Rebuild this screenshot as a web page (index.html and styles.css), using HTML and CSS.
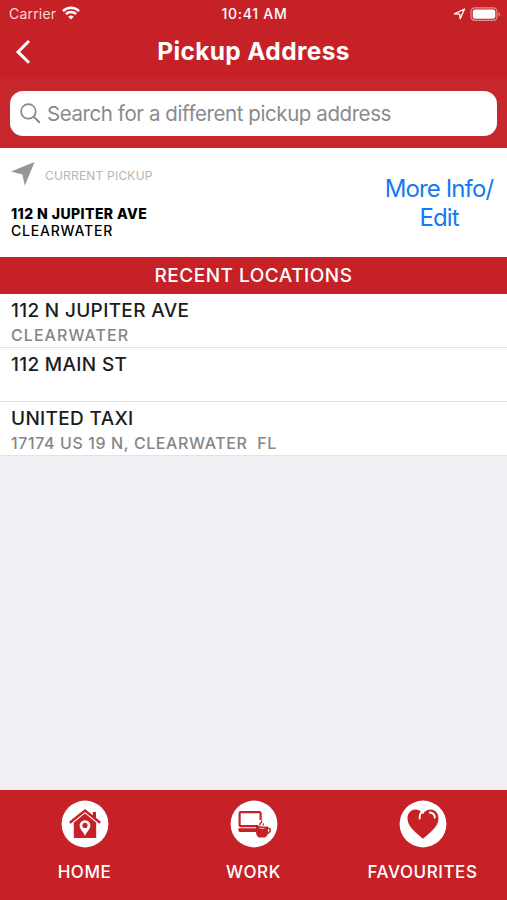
FILE: index.html
```html
<!DOCTYPE html>
<html lang="en">
<head>
    <meta charset="UTF-8">
    <meta name="viewport" content="width=device-width, initial-scale=1.0">
    <title>Pickup Address</title>
    <link rel="stylesheet" href="styles.css">
</head>
<body>
    <div class="app">
        <header class="top">
            <div class="status-bar">
                <div class="carrier">
                    <span>Carrier</span>
                    <svg width="18" height="14" viewBox="0 0 18 14" fill="none" stroke="#fff" stroke-width="2.5">
                        <path d="M1 5.1a11.5 11.5 0 0 1 16 0M3.9 8.2a7.3 7.3 0 0 1 10.2 0"/>
                        <path d="M9 13.6 6.2 10.8a4 4 0 0 1 5.6 0z" fill="#fff" stroke="none"/>
                    </svg>
                </div>
                <div class="time">10:41 AM</div>
                <div class="indicators">
                    <svg width="13" height="12" viewBox="0 0 13 12" fill="none" stroke="#fff" stroke-width="1.3" stroke-linejoin="round">
                        <path d="M1.5 5.8 11.5 1 7.2 10.8 6.6 6.2z"/>
                    </svg>
                    <svg width="31" height="14" viewBox="0 0 31 14">
                        <rect x="1" y=".8" width="26" height="12.6" rx="3.8" fill="none" stroke="#e39195" stroke-width="1.2"/>
                        <rect x="2.8" y="2.5" width="22.5" height="9.2" rx="2.2" fill="#fff"/>
                        <path d="M28.6 5a2.5 2.5 0 0 1 0 4.5z" fill="#e39195"/>
                    </svg>
                </div>
            </div>
            <div class="nav-bar">
                <svg class="back" width="18" height="26" viewBox="0 0 18 26" fill="none" stroke="#fff" stroke-width="3">
                    <path d="M14 2 3 12.9 14 23.8"/>
                </svg>
                <h1>Pickup Address</h1>
            </div>
        </header>

        <div class="search">
            <div class="search-box">
                <svg width="21" height="21" viewBox="0 0 21 21" fill="none" stroke="#88888b" stroke-width="1.7">
                    <circle cx="8.4" cy="8.4" r="7.3"/>
                    <path d="M13.6 13.6 19.8 19.8" stroke-width="2"/>
                </svg>
                <span>Search for a different pickup address</span>
            </div>
        </div>

        <section class="current">
            <div class="current-info">
                <div class="current-label">
                    <svg width="24" height="24" viewBox="0 0 24 24" fill="#969696">
                        <path d="M0 9.6 23.5 0 13.8 23.8 11.4 12.4z"/>
                    </svg>
                    <span>CURRENT PICKUP</span>
                </div>
                <div class="current-street">112 N JUPITER AVE</div>
                <div class="current-city">CLEARWATER</div>
            </div>
            <a class="more-info">More Info/<br>Edit</a>
        </section>

        <h2>RECENT LOCATIONS</h2>
        <ul class="locations">
            <li>
                <div class="name">112 N JUPITER AVE</div>
                <div class="detail">CLEARWATER</div>
            </li>
            <li>
                <div class="name">112 MAIN ST</div>
            </li>
            <li>
                <div class="name">UNITED TAXI</div>
                <div class="detail address">17174 US 19 N, CLEARWATER&nbsp; FL</div>
            </li>
        </ul>

        <footer class="tabs">
            <div class="tab">
                <svg width="48" height="48" viewBox="0 0 48 48">
                    <circle cx="24" cy="24" r="23.4" fill="#fff"/>
                    <path d="M12.8 22.5 24 13.3 35.2 22.5V38H12.8z" fill="#c62127"/>
                    <path d="M8.8 22.3 24 9.8 39.2 22.3" fill="none" stroke="#fff" stroke-width="5"/>
                    <path d="M31.8 12h3.2v6h-3.2z" fill="#c62127"/>
                    <path d="M8.8 22.8 24 10.6 39.2 22.8" fill="none" stroke="#c62127" stroke-width="2.4"/>
                    <path d="M24 36c-1.2-3.6-5.4-6.6-5.4-10.4a5.4 5.4 0 0 1 10.8 0c0 3.8-4.2 6.8-5.4 10.4z" fill="#fff"/>
                    <circle cx="24" cy="25.4" r="2.6" fill="#c62127"/>
                </svg>
                <span>HOME</span>
            </div>
            <div class="tab">
                <svg width="48" height="48" viewBox="0 0 48 48">
                    <circle cx="24" cy="24" r="23.4" fill="#fff"/>
                    <rect x="9.6" y="12.2" width="21" height="14" rx="1.2" fill="none" stroke="#c62127" stroke-width="2.2"/>
                    <path d="M8.4 28.3h18v3.6H10q-1.6 0-1.6-1.6z" fill="#c62127"/>
                    <path d="M28.5 20h6v6.5h-6z" fill="#fff"/>
                    <path d="M26 26.5h12v5c0 3.800-1.800 6-3.800 6h-4.400c-2.200 0-3.800-2.400-3.800-6z" fill="#c62127"/>
                    <path d="M37.500 28.300q3-.6 2.600 2.200-.4 2.600-3.200 3.200" fill="none" stroke="#c62127" stroke-width="1.600"/>
                    <path d="M30.500 25.500q-1.500-1.300.4-2.600 1.600-1.300.2-2.500M33.500 25.500q-.8-1 .5-2" fill="none" stroke="#c62127" stroke-width="1.300"/>
                    <path d="M29.500 28q2.500 1.300 5 0" fill="none" stroke="#fff" stroke-width=".7"/>
                </svg>
                <span>WORK</span>
            </div>
            <div class="tab">
                <svg width="48" height="48" viewBox="0 0 48 48">
                    <circle cx="24" cy="24" r="23.4" fill="#fff"/>
                    <path d="M24 38.8C18 33.5 8.5 27 8.5 18.3c0-5 3.5-8.7 7.8-8.7 3.6 0 6.4 1.9 7.7 4.7 1.3-2.8 4.2-4.7 7.7-4.7 4.4 0 7.8 3.7 7.8 8.7 0 8.7-9.5 15.2-15.5 20.5z" fill="#c62127"/>
                    <path d="M20.7 18.5c-.4-3.5.8-6.3 4.3-8.5M30.8 12.5c3 .3 4.9 2.2 5 5.1" fill="none" stroke="#fff" stroke-width="1.9" stroke-linecap="round"/>
                </svg>
                <span>FAVOURITES</span>
            </div>
        </footer>
    </div>
</body>
</html>
```
FILE: styles.css
```css
* {
    box-sizing: border-box;
}

body {
    margin: 0;
    font-family: Inter, "Liberation Sans", sans-serif;
    background-color: #efeff4;
}

svg {
    display: block;
    flex-shrink: 0;
}

.app {
    height: 900px;
    display: flex;
    flex-direction: column;
    overflow: hidden;
}

.top {
    height: 79px;
    background-color: #c62127;
    color: #fff;
}

.status-bar {
    height: 27px;
    padding: 0 7px 0 9px;
    display: grid;
    grid-template-columns: 1fr auto 1fr;
    align-items: center;
    font-size: 14px;
}

.carrier {
    display: flex;
    align-items: center;
    gap: 6px;
    color: #f6d9da;
    letter-spacing: 0.2px;
}

.carrier svg {
    margin-top: -2px;
}

.time {
    font-weight: 500;
    letter-spacing: 0.75px;
}

.indicators {
    display: flex;
    align-items: center;
    justify-content: flex-end;
    gap: 4px;
    margin-right: -1px;
}

.nav-bar {
    height: 48px;
    display: grid;
    grid-template-columns: 1fr auto 1fr;
    align-items: center;
}

.back {
    margin: 1px 0 0 15px;
}

h1 {
    margin: 0;
    font-size: 24.5px;
    font-weight: 700;
    letter-spacing: 0.35px;
}

.search {
    height: 69px;
    padding: 12px 10px;
    background-color: #c7282e;
}

.search-box {
    height: 45px;
    padding: 0 10px;
    display: flex;
    align-items: center;
    gap: 6px;
    background-color: #fff;
    border-radius: 13px;
    color: #8a8a8d;
    font-size: 20.5px;
    letter-spacing: -0.42px;
}

.current {
    height: 109px;
    padding: 14px 10px 0 11px;
    display: flex;
    justify-content: space-between;
    background-color: #fff;
}

.current-label {
    display: flex;
    gap: 10px;
    color: #b5b5b5;
    font-size: 12px;
    line-height: 28px;
    letter-spacing: 0.2px;
}

.current-street {
    margin-top: 14px;
    font-size: 14px;
    font-weight: 800;
    line-height: 19px;
    letter-spacing: 0.43px;
}

.current-city {
    font-size: 14px;
    font-weight: 500;
    line-height: 16px;
    letter-spacing: 0.8px;
}

.more-info {
    width: 116px;
    padding-top: 12px;
    color: #147bf0;
    font-size: 24px;
    line-height: 29px;
    letter-spacing: -0.9px;
    text-align: center;
}

h2 {
    height: 37px;
    margin: 0;
    background-color: #c62127;
    color: #fff;
    font-size: 19px;
    font-weight: 500;
    line-height: 37px;
    letter-spacing: 0.5px;
    text-align: center;
}

.locations {
    margin: 0;
    padding: 0;
    list-style: none;
}

.locations li {
    height: 54px;
    padding: 5px 11px 0;
    background-color: #fff;
    border-bottom: 1px solid #e3e3e5;
}

.name {
    color: #1c1c1c;
    font-size: 19px;
    font-weight: 500;
    line-height: 24px;
    letter-spacing: 0.33px;
}

.detail {
    color: #868686;
    font-size: 16px;
    font-weight: 500;
    line-height: 25px;
    letter-spacing: 1.05px;
}

.address {
    letter-spacing: 0.6px;
}

.tabs {
    height: 110px;
    margin-top: auto;
    padding-top: 10px;
    display: grid;
    grid-template-columns: repeat(3, 1fr);
    background-color: #c62127;
    color: #fff;
    font-size: 17px;
    font-weight: 500;
    letter-spacing: 0.55px;
}

.tab {
    display: flex;
    flex-direction: column;
    align-items: center;
    gap: 14px;
}
```
